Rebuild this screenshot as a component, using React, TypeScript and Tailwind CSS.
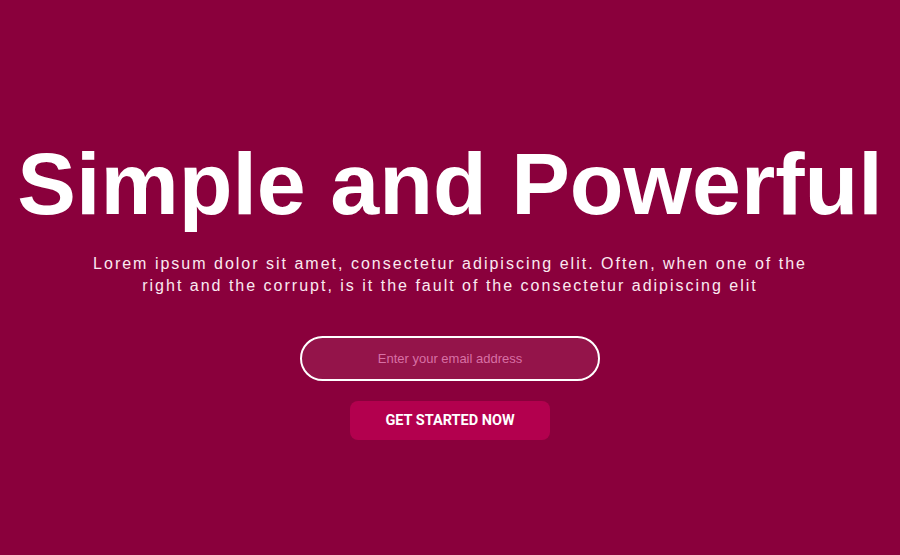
export default function App() {
  return (
    <div className="min-h-[555px] w-full bg-[#8a003c] flex flex-col items-center pt-[130px] font-['Liberation_Sans',Arial,sans-serif] text-white">
      <h1 className="text-[88px] font-bold leading-none mt-[10px]">Simple and Powerful</h1>
      <p className="mt-[25px] max-w-[730px] text-center text-[16px] leading-[22px] tracking-[2px] text-[#fbe9f1]">
        Lorem ipsum dolor sit amet, consectetur adipiscing elit. Often, when one of the right and the corrupt, is it the fault of the consectetur adipiscing elit
      </p>
      <input
        type="email"
        placeholder="Enter your email address"
        className="mt-[39px] h-[45px] w-[300px] rounded-full border-2 border-white bg-[#94144a] text-center text-[13px] text-white outline-none placeholder:text-[#d870a5]"
      />
      <button className="mt-[20px] h-[39px] w-[200px] rounded-lg bg-[#b3004e] font-['Roboto',sans-serif] text-[14.5px] font-bold uppercase text-white">
        Get Started Now
      </button>
    </div>
  );
}
